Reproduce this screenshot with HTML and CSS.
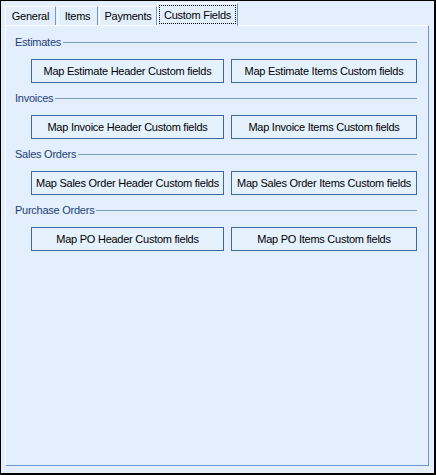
FILE: index.html
```html
<!DOCTYPE html>
<html>
<head>
<meta charset="utf-8">
<link rel="stylesheet" href="styles.css">
</head>
<body>
<div class="window">
  <div class="tabs">
    <div class="tab tab-general">General</div>
    <div class="tab tab-items">Items</div>
    <div class="tab tab-payments">Payments</div>
    <div class="tab tab-active"><span class="focus">Custom Fields</span></div>
  </div>
  <div class="panel">
    <section class="group">
      <div class="legend"><span class="legend-text">Estimates</span><span class="legend-line"></span></div>
      <div class="buttons">
        <button class="btn btn-header">Map Estimate Header Custom fields</button>
        <button class="btn btn-items">Map Estimate Items Custom fields</button>
      </div>
    </section>
    <section class="group">
      <div class="legend"><span class="legend-text">Invoices</span><span class="legend-line"></span></div>
      <div class="buttons">
        <button class="btn btn-header">Map Invoice Header Custom fields</button>
        <button class="btn btn-items">Map Invoice Items Custom fields</button>
      </div>
    </section>
    <section class="group">
      <div class="legend"><span class="legend-text">Sales Orders</span><span class="legend-line"></span></div>
      <div class="buttons">
        <button class="btn btn-header">Map Sales Order Header Custom fields</button>
        <button class="btn btn-items">Map Sales Order Items Custom fields</button>
      </div>
    </section>
    <section class="group">
      <div class="legend"><span class="legend-text">Purchase Orders</span><span class="legend-line"></span></div>
      <div class="buttons">
        <button class="btn btn-header">Map PO Header Custom fields</button>
        <button class="btn btn-items">Map PO Items Custom fields</button>
      </div>
    </section>
  </div>
</div>
</body>
</html>
```
FILE: styles.css
```css
html, body {
  margin: 0;
  padding: 0;
}
body {
  width: 436px;
  height: 475px;
  background: #e3effd;
  font-family: "Liberation Sans", Arial, sans-serif;
  font-size: 11px;
  letter-spacing: -0.25px;
  color: #000;
}
.window {
  box-sizing: border-box;
  width: 436px;
  height: 475px;
  border: 1px solid #000;
  border-right-width: 2px;
  border-bottom-width: 2px;
  padding: 0 5px 7px 4px;
  display: flex;
  flex-direction: column;
}
.tabs {
  display: flex;
  align-items: flex-end;
  height: 24px;
  flex: none;
  position: relative;
  z-index: 1;
}
.tab {
  box-sizing: border-box;
  height: 19px;
  border-top: 1px solid #fff;
  border-left: 1px solid #fff;
  border-right: 1px solid #6d98cc;
  background: #e3effd;
  display: flex;
  align-items: center;
  justify-content: center;
  margin-right: 1px;
  padding-bottom: 1px;
  white-space: nowrap;
}
.tab-general { width: 51px; }
.tab-items { width: 41px; }
.tab-payments { width: 58px; margin-right: 0; }
.tab-active {
  width: 81px;
  height: 23px;
  margin-bottom: -1px;
  padding: 1px 1px 2px 1px;
  align-items: stretch;
}
.focus {
  flex: 1;
  border: 1px dotted #000;
  display: flex;
  align-items: center;
  justify-content: center;
}
.panel {
  flex: 1;
  border-top: 1px solid #fff;
  border-left: 1px solid #fff;
  border-right: 1px solid #6d98cc;
  border-bottom: 1px solid #6d98cc;
  padding: 9px 11px 0 9px;
}
.legend {
  display: flex;
  align-items: center;
  height: 14px;
}
.legend-text {
  color: #1f3f78;
  white-space: nowrap;
}
.legend-line {
  flex: 1;
  height: 1px;
  margin-left: 2px;
  background: #7f9dbf;
}
.buttons {
  display: flex;
  justify-content: flex-end;
  gap: 7px;
  margin-top: 10px;
  margin-bottom: 8px;
}
.btn {
  box-sizing: border-box;
  height: 24px;
  border: 1px solid #3d6a9b;
  background: #e5f1fd;
  font: inherit;
  letter-spacing: inherit;
  color: #000;
  padding: 0;
  margin: 0;
  white-space: nowrap;
}
.btn-header { width: 193px; }
.btn-items { width: 186px; }
```
